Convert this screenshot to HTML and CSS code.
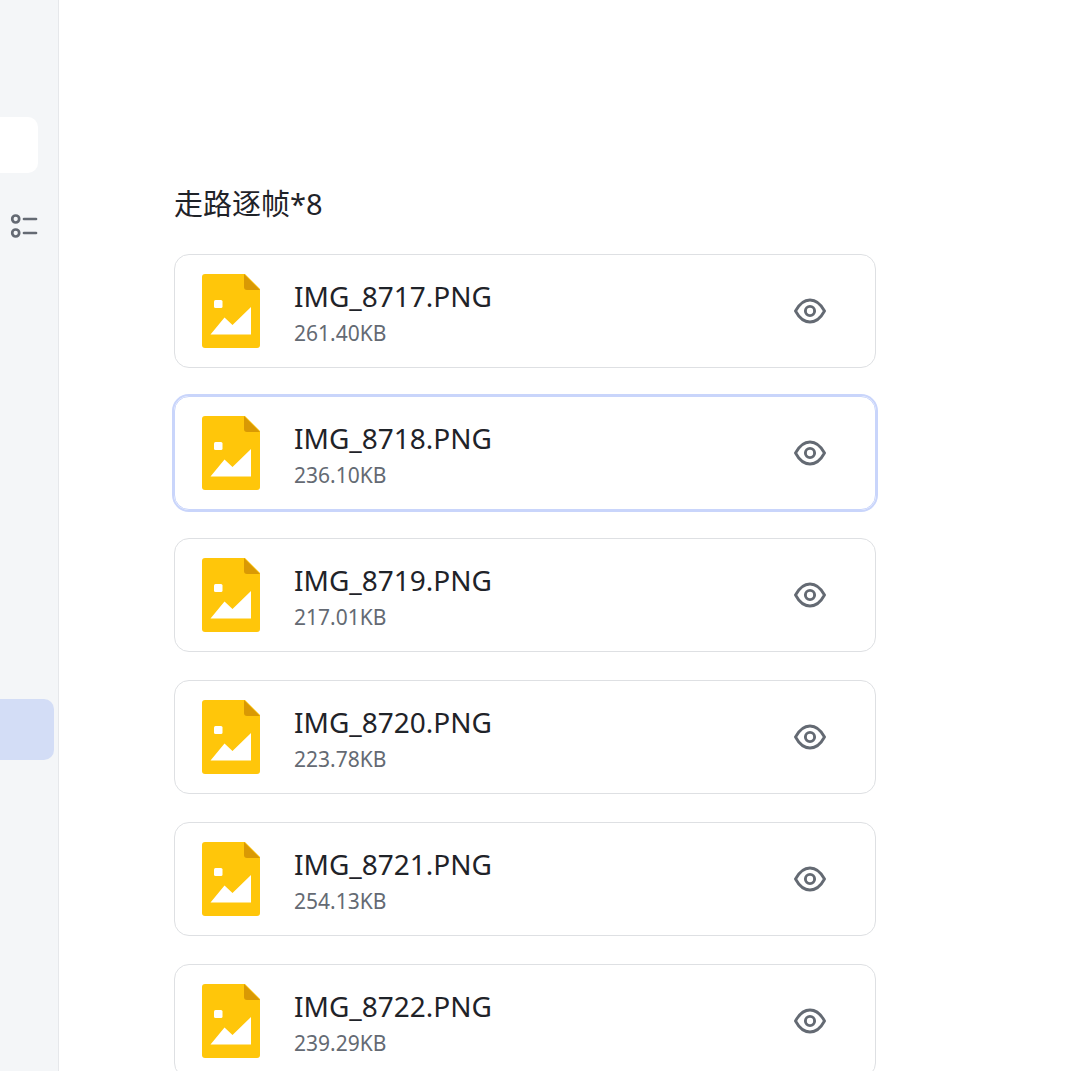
FILE: index.html
```html
<!DOCTYPE html>
<html lang="zh-CN">

<head>
    <meta charset="UTF-8">
    <meta name="viewport" content="width=device-width, initial-scale=1.0">
    <title>走路逐帧*8</title>
    <link rel="stylesheet" href="styles.css">
</head>

<body>
    <!-- 共用图标 -->
    <svg class="sprite" aria-hidden="true">
        <symbol id="icon-image" viewBox="0 0 58 74">
            <path fill="#ffc60a" d="M3 0H43L58 15V71a3 3 0 0 1-3 3H3a3 3 0 0 1-3-3V3a3 3 0 0 1 3-3z" />
            <path fill="#d99904" d="M42 0L58 16H45a3 3 0 0 1-3-3z" />
            <rect x="12" y="26" width="8.500" height="8" rx="1.500" fill="#fff" />
            <path fill="#fff" d="M8.500 60.500L22.500 43.500L30.500 51L49 33V60.500z" />
        </symbol>
        <symbol id="icon-eye" viewBox="0 0 32 26">
            <g fill="none" stroke="#646a73" stroke-width="2.900">
                <path stroke-linejoin="round" d="M1.500 13C5 6.500 10 2 16 2s11 4.500 14.500 11C27 19.500 22 24 16 24S5 19.500 1.500 13z" />
                <circle cx="16" cy="13" r="4.600" />
            </g>
        </symbol>
    </svg>

    <aside class="sidebar">
        <input class="search" type="text" aria-label="搜索">
        <button class="outline-btn" type="button" aria-label="目录">
            <svg width="28" height="26" viewBox="0 0 28 26" fill="none" stroke="#646a73" stroke-width="2.700" stroke-linecap="round">
                <circle cx="5.700" cy="6" r="3.500" />
                <circle cx="5.700" cy="20" r="3.500" />
                <path d="M14 6H26M14 20H26" />
            </svg>
        </button>
        <a class="nav-item active" href="#" aria-label="走路逐帧"></a>
    </aside>

    <main class="content">
        <p class="title">走路逐帧*8</p>
        <ul class="file-list">
            <li class="file-card">
                <svg class="file-icon"><use href="#icon-image" /></svg>
                <div class="file-info">
                    <span class="file-name">IMG_8717.PNG</span>
                    <span class="file-size">261.40KB</span>
                </div>
                <button class="preview" type="button" aria-label="预览"><svg class="eye"><use href="#icon-eye" /></svg></button>
            </li>
            <li class="file-card selected">
                <svg class="file-icon"><use href="#icon-image" /></svg>
                <div class="file-info">
                    <span class="file-name">IMG_8718.PNG</span>
                    <span class="file-size">236.10KB</span>
                </div>
                <button class="preview" type="button" aria-label="预览"><svg class="eye"><use href="#icon-eye" /></svg></button>
            </li>
            <li class="file-card">
                <svg class="file-icon"><use href="#icon-image" /></svg>
                <div class="file-info">
                    <span class="file-name">IMG_8719.PNG</span>
                    <span class="file-size">217.01KB</span>
                </div>
                <button class="preview" type="button" aria-label="预览"><svg class="eye"><use href="#icon-eye" /></svg></button>
            </li>
            <li class="file-card">
                <svg class="file-icon"><use href="#icon-image" /></svg>
                <div class="file-info">
                    <span class="file-name">IMG_8720.PNG</span>
                    <span class="file-size">223.78KB</span>
                </div>
                <button class="preview" type="button" aria-label="预览"><svg class="eye"><use href="#icon-eye" /></svg></button>
            </li>
            <li class="file-card">
                <svg class="file-icon"><use href="#icon-image" /></svg>
                <div class="file-info">
                    <span class="file-name">IMG_8721.PNG</span>
                    <span class="file-size">254.13KB</span>
                </div>
                <button class="preview" type="button" aria-label="预览"><svg class="eye"><use href="#icon-eye" /></svg></button>
            </li>
            <li class="file-card">
                <svg class="file-icon"><use href="#icon-image" /></svg>
                <div class="file-info">
                    <span class="file-name">IMG_8722.PNG</span>
                    <span class="file-size">239.29KB</span>
                </div>
                <button class="preview" type="button" aria-label="预览"><svg class="eye"><use href="#icon-eye" /></svg></button>
            </li>
        </ul>
    </main>
</body>

</html>
```
FILE: styles.css
```css
* {
    box-sizing: border-box;
}

body {
    font-family: 'Noto Sans', 'Noto Sans CJK SC', sans-serif;
    margin: 0;
    background: #fff;
    color: #1f2329;
    display: flex;
    height: 100vh;
    overflow: hidden;
}

button {
    border: 0;
    padding: 0;
    background: none;
    cursor: pointer;
}

svg {
    display: block;
}

.sprite {
    position: absolute;
    width: 0;
    height: 0;
}

/* 侧边栏 */
.sidebar {
    flex: 0 0 59px;
    display: flex;
    flex-direction: column;
    align-items: flex-start;
    padding-top: 117px;
    background: #f4f6f8;
    border-right: 1px solid #e6e8eb;
}

.search {
    width: 38px;
    height: 56px;
    border: 0;
    border-radius: 0 10px 10px 0;
    background: #fff;
}

.outline-btn {
    margin: 40px 0 0 10px;
}

.nav-item {
    width: 54px;
    height: 61px;
    margin-top: 460px;
    border-radius: 0 10px 10px 0;
}

.nav-item.active {
    background: #d3ddf6;
}

/* 正文 */
.content {
    flex: 1;
    min-width: 0;
    padding: 184px 204px 0 115px;
    overflow: hidden;
}

.title {
    margin: 0;
    font-size: 29px;
    line-height: 40px;
}

.file-list {
    list-style: none;
    margin: 30px 0 0;
    padding: 0;
    display: flex;
    flex-direction: column;
    gap: 28px;
}

.file-card {
    display: flex;
    align-items: center;
    height: 114px;
    padding: 0 49px 0 27px;
    border: 1px solid #dee0e3;
    border-radius: 15px;
}

.file-card.selected {
    border-color: #c9d5fb;
    box-shadow: 0 0 0 2px #c9d5fb;
}

.file-icon {
    flex: none;
    width: 58px;
    height: 74px;
}

.file-info {
    flex: 1;
    min-width: 0;
    margin-left: 34px;
    padding-top: 4px;
    display: flex;
    flex-direction: column;
}

.file-name {
    font-size: 28px;
    line-height: 40px;
}

.file-size {
    font-size: 21px;
    line-height: 34px;
    color: #646a73;
}

.eye {
    width: 32px;
    height: 26px;
}
```
